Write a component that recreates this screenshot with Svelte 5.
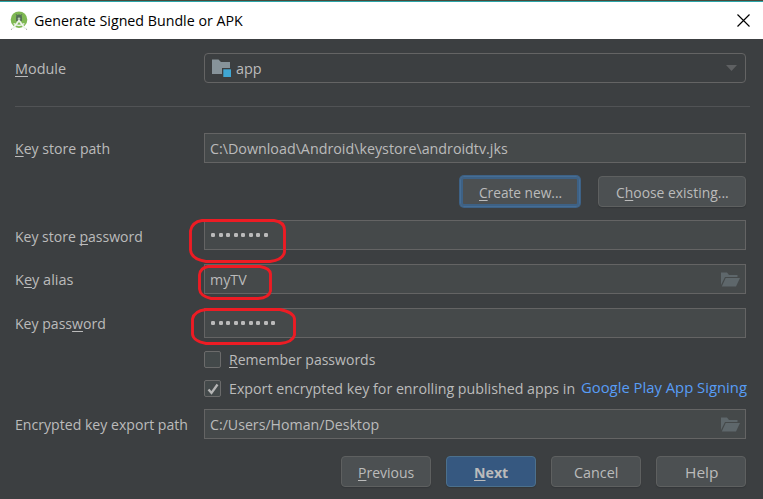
<script>
  let remember = $state(false);
  let exportKey = $state(true);

  // "&" marks the mnemonic letter of a label
  function parts(label) {
    const i = label.indexOf('&');
    return i < 0 ? [label, '', ''] : [label.slice(0, i), label[i + 1], label.slice(i + 2)];
  }

  // Condenses a label so that it fills its slot exactly
  function fit(node, width) {
    node.style.transform = `scaleX(${width / node.offsetWidth})`;
  }
</script>

{#snippet text(label, width)}
  {@const [before, key, after] = parts(label)}
  <span class="slot" style:width="{width}px"><span class="text" use:fit={width}>{before}{#if key}<u>{key}</u>{/if}{after}</span></span>
{/snippet}

{#snippet openFolder()}
  <svg class="browse" width="20" height="15" viewBox="0 0 20 15">
    <path fill="#5e676b" d="M0 0.5H6L8 3H16.5V5H4L0 13Z" />
    <path fill="#5e676b" d="M4.7 6H19L15 14.5H0.8Z" />
  </svg>
{/snippet}

<div class="dialog">
  <header>
    <svg class="logo" width="18" height="20" viewBox="0 0 18 20">
      <circle cx="9" cy="8.7" r="8.3" fill="#7fb853" />
      <path d="M6 6.5a3 3 0 0 1 6 0V10H6Z" fill="#557056" />
      <path d="M6 3l1.2 2M12 3l-1.2 2" stroke="#557056" stroke-width=".8" />
      <path d="M9 9.500L3 17.5M9 9.500l6 8" stroke="#eef3ec" stroke-width="1.8" fill="none" />
      <path d="M3.6 12.5Q9 16.3 14.4 12.5" stroke="#eef3ec" stroke-width="1.5" fill="none" />
      <circle cx="9" cy="7.8" r="1.3" fill="#b7cbb0" />
      <path d="M2 17.5L1.2 19M16 17.5l.8 1.5" stroke="#aeb6ad" stroke-width="1" />
    </svg>
    <h1>{@render text('Generate Signed Bundle or APK', 209)}</h1>
    <svg class="close" width="13" height="13" viewBox="0 0 13 13"><path d="M.5 .5l12 12M12.5 .5l-12 12" stroke="#000" stroke-width="1.15" /></svg>
  </header>

  <main>
    <div class="row module">
      <div class="label">{@render text('&Module', 51)}</div>
      <div class="field combo">
        <svg width="20" height="19" viewBox="0 0 20 19">
          <path fill="#87939a" d="M0 .5H6.5L9 3H18V9H10V15H0Z" />
          <path fill="#40a7d4" d="M11.3 10.3H19V18H11.3Z" />
        </svg>
        {@render text('app', 26)}
        <svg class="arrow" width="11" height="6" viewBox="0 0 11 6"><path fill="#5e6062" d="M0 0H11L5.5 6Z" /></svg>
      </div>
    </div>

    <hr />

    <div class="row path">
      <div class="label">{@render text('&Key store path', 95)}</div>
      <div class="field">{@render text('C:\\Download\\Android\\keystore\\androidtv.jks', 298)}</div>
    </div>

    <div class="store-actions">
      <button class="focused">{@render text('&Create new...', 83)}</button>
      <button class="choose">{@render text('C&hoose existing...', 113)}</button>
    </div>

    <div class="row store-password">
      <div class="label">{@render text('Key store &password', 128)}</div>
      <div class="field dots">{#each Array(8) as _}<i></i>{/each}</div>
    </div>
    <div class="row alias">
      <div class="label">{@render text('K&ey alias', 58)}</div>
      <div class="field">{@render text('myTV', 37)}{@render openFolder()}</div>
    </div>
    <div class="row key-password">
      <div class="label">{@render text('Key pass&word', 91)}</div>
      <div class="field dots">{#each Array(9) as _}<i></i>{/each}</div>
    </div>

    <div class="check first">
      <button class="box" aria-label="Remember passwords" onclick={() => (remember = !remember)}>
        {#if remember}<svg width="12" height="12" viewBox="0 0 12 12"><path d="M1.5 6.5L4.5 10 10.5 1.5" /></svg>{/if}
      </button>
      {@render text('&Remember passwords', 146)}
    </div>
    <div class="check">
      <button class="box" aria-label="Export encrypted key" onclick={() => (exportKey = !exportKey)}>
        {#if exportKey}<svg width="12" height="12" viewBox="0 0 12 12"><path d="M1.5 6.5L4.5 10 10.5 1.5" /></svg>{/if}
      </button>
      {@render text('Export encrypted key for enrolling published apps in', 346)}
      <span class="link">{@render text('Google Play App Signing', 166)}</span>
    </div>

    <div class="row export">
      <div class="label">{@render text('Encrypted key export path', 173)}</div>
      <div class="field">{@render text('C:/Users/Homan/Desktop', 169)}{@render openFolder()}</div>
    </div>

    <footer>
      <button>{@render text('&Previous', 56)}</button>
      <button class="primary">{@render text('&Next', 34)}</button>
      <button>{@render text('Cancel', 44)}</button>
      <button>{@render text('Help', 33)}</button>
    </footer>
  </main>

  <svg class="marks" width="763" height="499" viewBox="0 0 763 499">
    <path d="M202 220.5H274Q284.500 222 284.500 230V252Q283 260 270 261.500H206Q191 259 190.500 250V231Q192 222 202 220.500Z" />
    <path d="M208 266.500H260Q270 268 270.500 274V291Q269 298 258 298.500H211Q200 296 199.500 289V275Q200 268 208 266.500Z" />
    <path d="M206 309.500H280Q293.500 312 294.500 319V335Q293 342 280 343.500H206Q193 341 192.500 334V319Q194 311 206 309.500Z" />
  </svg>
</div>

<style>
  :global(body) { background: #3c3f41; }
  .dialog {
    position: relative;
    width: 763px;
    height: 499px;
    overflow: hidden;
    background: #3c3f41;
    color: #bbb;
    font: 15px/20px 'Open Sans', 'Noto Sans', sans-serif;
  }
  .dialog * { box-sizing: border-box; }
  .slot { display: inline-block; flex: none; height: 20px; text-align: left; white-space: nowrap; }
  .text { display: inline-block; transform-origin: 0 50%; }
  u { text-decoration: underline; text-decoration-thickness: 1px; text-underline-offset: 2px; text-decoration-skip-ink: none; }
  header {
    display: flex;
    align-items: center;
    height: 39px;
    padding: 2px 13px 0 10px;
    border-top: 1px solid #4a4a3a;
    background: #fff;
    box-shadow: inset 0 1px #2ba5a9;
    color: #000;
  }
  .logo { flex: none; }
  h1 { margin: 0 0 0 6px; font: inherit; font-size: 14.5px; }
  .close { margin-left: auto; margin-top: -1px; }
  main { padding-left: 15px; }
  .row { display: flex; align-items: center; width: 731px; height: 30px; }
  .label { width: 189px; height: 20px; }
  .field {
    display: flex;
    align-items: center;
    width: 542px;
    height: 30px;
    padding: 0 4px 0 5px;
    border: 1px solid #646464;
    background: #45494a;
  }
  .combo { padding: 0 8px 0 7px; border-radius: 4px; background: #3c3f41; gap: 4px; }
  .arrow { margin-left: auto; }
  .module { margin-top: 14px; }
  hr { width: 735px; height: 1px; margin: 23px 0 26px; border: 0; background: #515355; }
  .store-actions { display: flex; justify-content: flex-end; gap: 18px; width: 731px; margin: 13px 0; }
  button {
    display: flex;
    align-items: center;
    justify-content: center;
    width: 90px;
    height: 31px;
    padding: 0;
    border: 1px solid #5e6060;
    border-radius: 4px;
    background: #4c5052;
    box-shadow: 0 1px 1px #34373a;
    color: #bbb;
    font: inherit;
  }
  .store-actions button { width: 148px; }
  .store-actions .focused { width: 120px; border-color: #466d94; box-shadow: 0 0 0 1px #3d6185, inset 0 0 0 2px #3d6185; }
  .store-password .label { height: 18px; }
  .alias { margin-top: 14px; }
  .key-password { margin-top: 14px; }
  .browse { margin-left: auto; }
  .dots { gap: 3.55px; padding: 0 0 0 6px; }
  .dots i { width: 4px; height: 4px; border-radius: 1.3px; background: #bbb; }
  .check { display: flex; align-items: center; height: 29px; padding-left: 189px; }
  .check.first { margin-top: 7px; }
  .check .slot { height: 22px; }
  .check .box { width: 17px; height: 17px; margin-right: 8px; border-color: #6b6b6b; border-radius: 2px; background: #43494a; box-shadow: none; }
  .box path { fill: none; stroke: #b5b5b5; stroke-width: 2.3; }
  .link { height: 24px; margin-left: 6px; color: #589df6; }
  .export { margin-top: 6px; }
  footer { display: flex; gap: 15px; margin: 17px 0 0 326px; }
  .primary { border-color: #4c708c; background: #365880; font-weight: 700; }
  .marks { position: absolute; inset: 0; pointer-events: none; fill: none; stroke: #ed1c24; stroke-width: 2.9; }
</style>
